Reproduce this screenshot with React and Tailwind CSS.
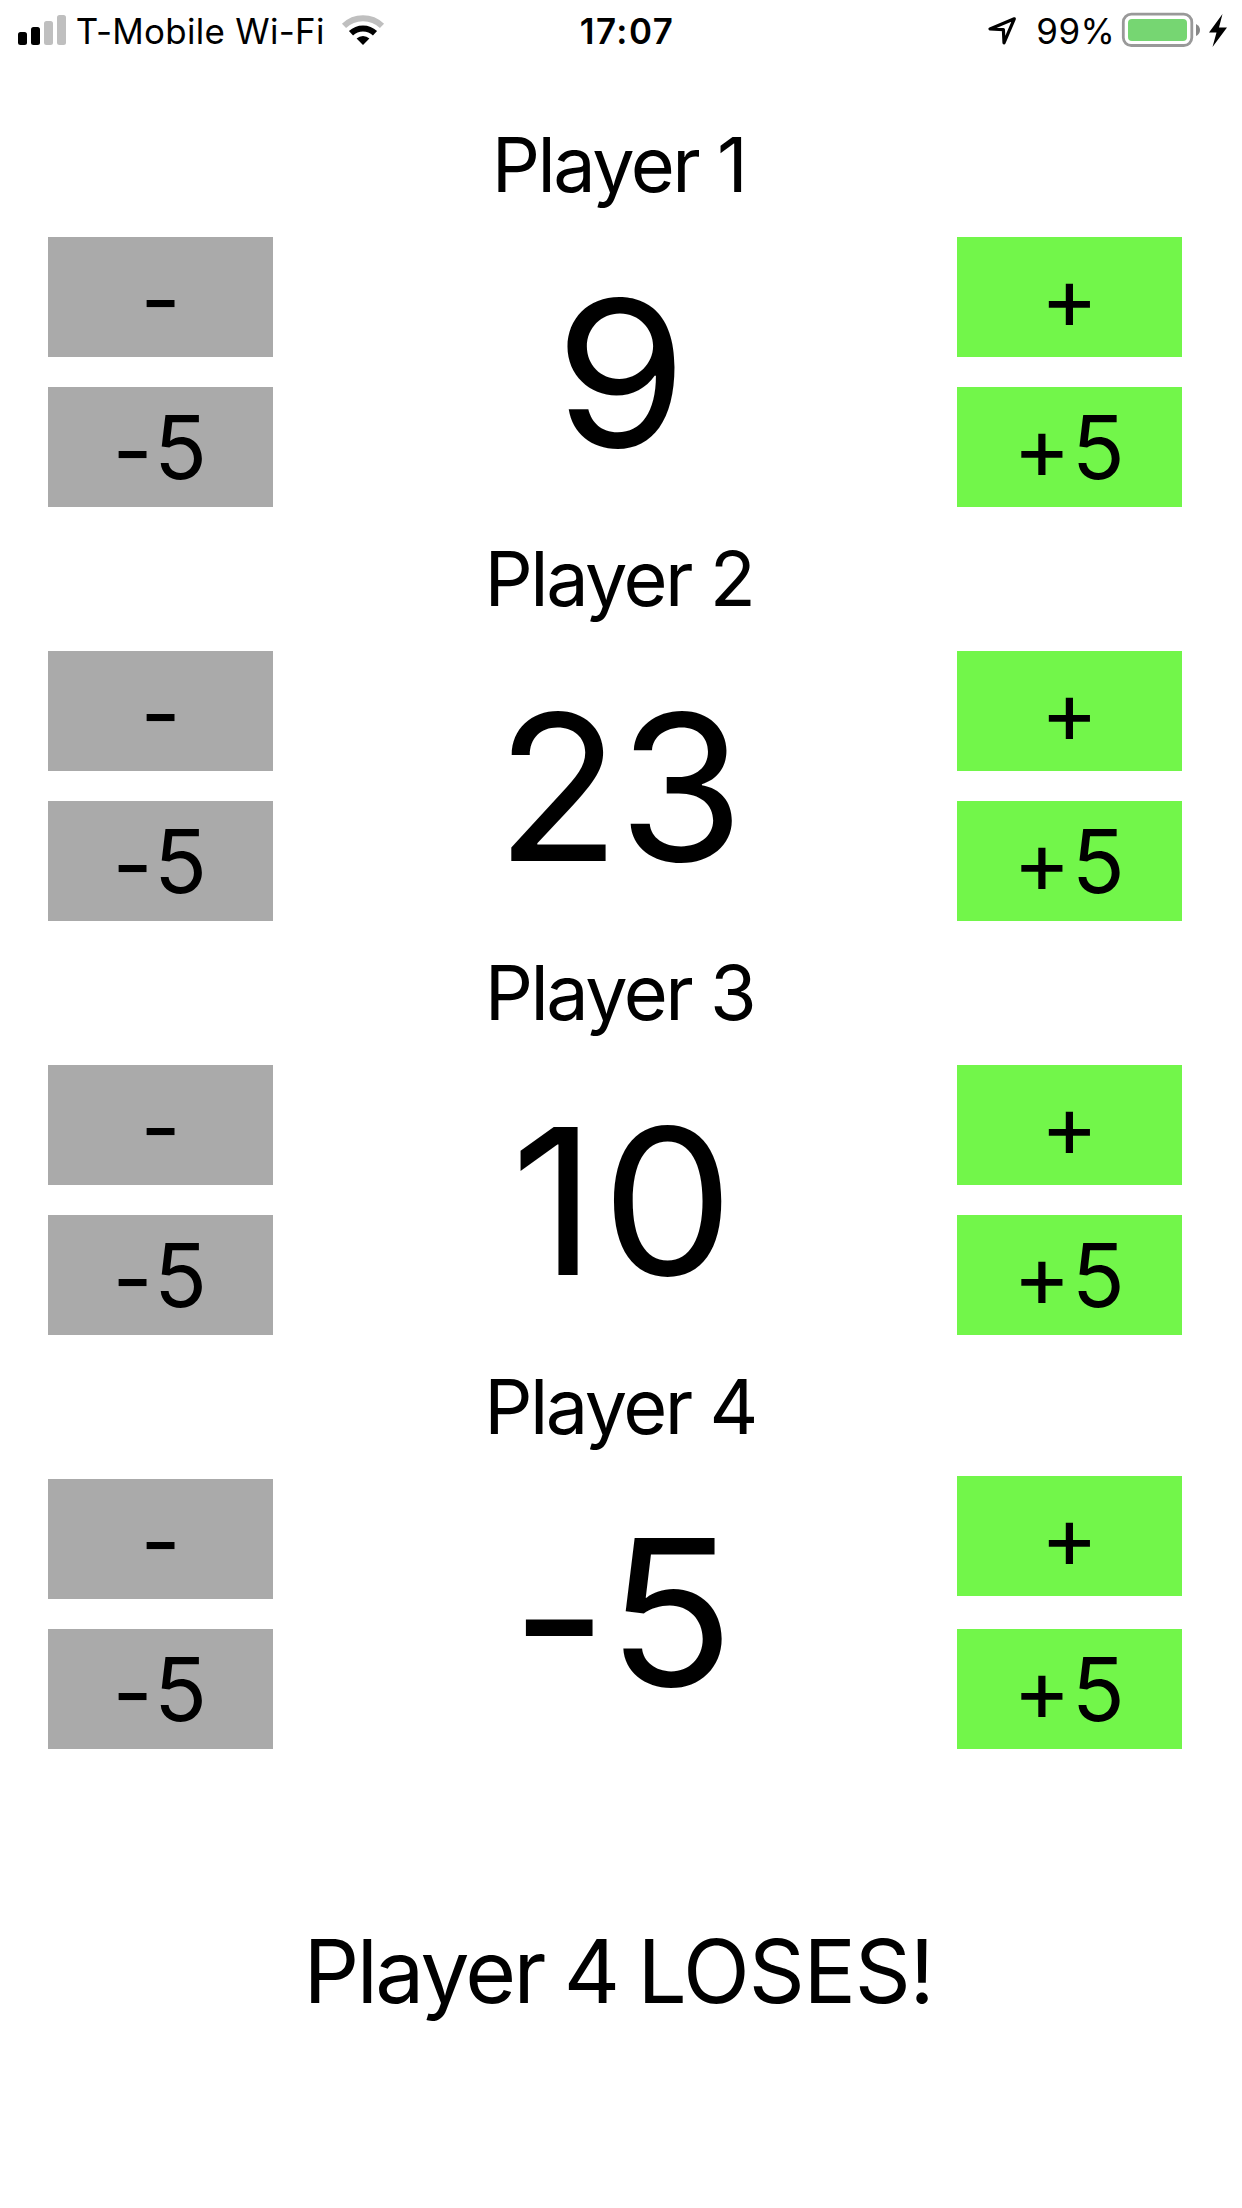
import React from 'react';

const players = [
  { name: 'Player 1', score: ['', '9'], scoreClass: 'leading-[272px]', digitClass: 'scale-x-[1.05]', nameClass: 'pr-[5px]', plusClass: '' },
  { name: 'Player 2', score: ['', '23'], scoreClass: 'leading-[272px] tracking-[-2px] pr-[4px]', digitClass: '', nameClass: 'pr-[4px]', plusClass: '' },
  { name: 'Player 3', score: ['', '10'], scoreClass: 'leading-[272px] tracking-[5.5px] pl-[9px]', digitClass: 'scale-x-[1.03]', nameClass: 'pr-[3px]', plusClass: '' },
  { name: 'Player 4', score: ['-', '5'], scoreClass: 'leading-[267px] pl-[4px]', digitClass: 'scale-x-[1.025]', nameClass: 'pr-[2px]', plusClass: '-mt-[3px] mb-[3px]' },
];

function Signal() {
  return (
    <svg className="ml-[18px] h-[62px] w-[48px]" viewBox="18 0 48 62">
      <rect x="18" y="32" width="9" height="13" rx="2.5" />
      <rect x="31" y="27" width="9" height="18" rx="2.5" />
      <rect x="44" y="21" width="9" height="24" rx="2.5" fill="#bfbfbf" />
      <rect x="57" y="15" width="9" height="30" rx="2.5" fill="#bfbfbf" />
    </svg>
  );
}

function Wifi() {
  return (
    <svg className="h-[62px] w-[44px]" viewBox="341 0 44 62" fill="none">
      <path d="M344 25.8 A27.5 27.5 0 0 1 382 25.8" stroke="#bfbfbf" strokeWidth="6" />
      <path d="M351 33.2 A17.5 17.5 0 0 1 375 33.2" stroke="#000" strokeWidth="6" />
      <path d="M363 45 L356.6 38.6 A9.3 9.3 0 0 1 369.4 38.6 Z" fill="#000" />
    </svg>
  );
}

function StatusBar() {
  return (
    <header className="grid h-[62px] grid-cols-3 items-center text-[34.9px] leading-[62px] whitespace-nowrap">
      <div className="flex items-center">
        <Signal />
        <span className="ml-[9.7px] w-[265.3px] tracking-[0.3px]">T-Mobile Wi-Fi</span>
        <Wifi />
      </div>
      <div className="pl-[12px] text-center font-semibold tracking-[1.5px]">17:07</div>
      <div className="flex items-center justify-end">
        <svg className="h-[62px] w-[32px]" viewBox="986 0 32 62" fill="none">
          <path d="M1014.3 18.8 L990 29 L1003.4 29.6 L1004 42.8 Z" stroke="#000" strokeWidth="3.2" strokeLinejoin="round" />
        </svg>
        <span className="ml-[18.3px] w-[84.7px] tracking-[0.5px]">99%</span>
        <svg className="mr-[13px] h-[62px] w-[108px]" viewBox="1121 0 108 62">
          <rect x="1123.3" y="14.2" width="68.5" height="31.3" rx="8" fill="none" stroke="#999" strokeWidth="2.8" />
          <rect x="1128" y="19" width="59" height="22" rx="4" fill="#76d672" />
          <path d="M1196 24 Q1200 26 1200 30 Q1200 34 1196 36 Z" fill="#888" />
          <path d="M1222.5 14 L1209 32.5 L1216.5 32.5 L1212.5 47 L1227 27.5 L1219 27.5 Z" />
        </svg>
      </div>
    </header>
  );
}

function StepButton({ sign, amount = '', tone, className = '', signClass = '' }) {
  return (
    <button className={`${tone} ${className} block h-[120px] w-[225px] text-center text-[87.3px] leading-[120px]`}>
      <span className={`${signClass} inline-block`}>{sign}</span>
      {amount}
    </button>
  );
}

function PlayerRow({ player }) {
  const [sign, digits] = player.score;
  return (
    <section className="mb-[30px]">
      <h2 className={`${player.nameClass} h-[83px] text-center text-[75.6px] leading-[83px] tracking-[-2.5px]`}>{player.name}</h2>
      <div className="mt-[31px] flex justify-between pr-[60px] pl-[48px]">
        <div className="flex flex-col gap-[30px]">
          <StepButton sign="-" tone="bg-[#aaaaaa]" signClass="translate-y-[2px]" />
          <StepButton sign="-" amount="5" tone="bg-[#aaaaaa]" className="tracking-[1.5px]" signClass="translate-y-[3px]" />
        </div>
        <div className={`${player.scoreClass} h-[270px] w-[684px] text-center text-[203.5px]`}>
          <span className={`${player.digitClass} ml-[12px] inline-block`}>
            {sign && <span className="inline-block translate-y-[5px]">{sign}</span>}
            {digits}
          </span>
        </div>
        <div className="flex flex-col gap-[30px]">
          <StepButton sign="+" tone="bg-[#72f64a]" className={player.plusClass} />
          <StepButton sign="+" amount="5" tone="bg-[#72f64a]" className="tracking-[1.2px]" />
        </div>
      </div>
    </section>
  );
}

export default function App() {
  return (
    <main className="h-[2208px] w-[1242px] overflow-hidden bg-white font-['Inter','Liberation_Sans',sans-serif] text-black [font-feature-settings:'calt'_0]">
      <StatusBar />
      <div className="pt-[61px]">
        {players.map((p) => (
          <PlayerRow key={p.name} player={p} />
        ))}
      </div>
      <p className="mt-[162px] pr-[5px] text-center text-[87.3px] leading-[120px] tracking-[-2.6px] [word-spacing:-2px]">
        Player 4 <span className="tracking-[-1.2px]">LOSES!</span>
      </p>
    </main>
  );
}
